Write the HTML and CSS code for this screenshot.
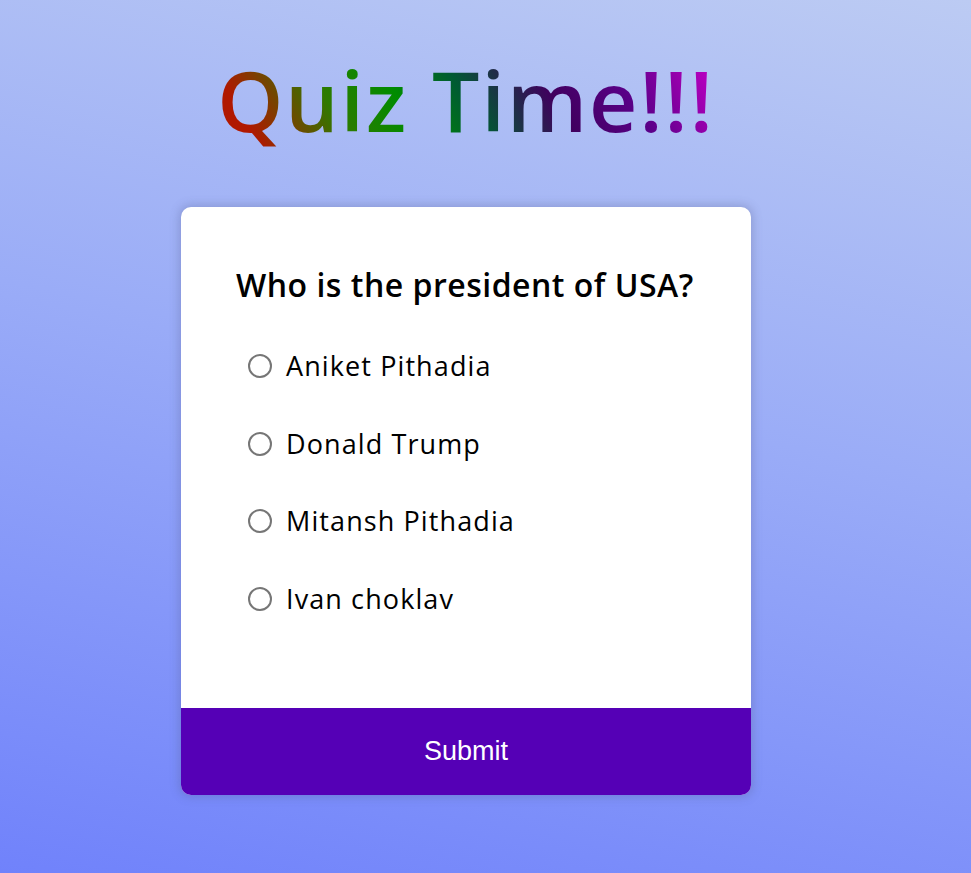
FILE: index.html
```html
<!DOCTYPE html>
<html lang="en">
<head>
<meta charset="utf-8">
<title>Quiz Time</title>
<link rel="stylesheet" href="styles.css">
</head>
<body>
<main class="page">
  <h1 class="title">Quiz Time!!!</h1>
  <section class="card">
    <div class="quiz-body">
      <h2 class="question">Who is the president of USA?</h2>
      <ul class="options">
        <li class="option"><span class="radio"></span><span class="label">Aniket Pithadia</span></li>
        <li class="option"><span class="radio"></span><span class="label">Donald Trump</span></li>
        <li class="option"><span class="radio"></span><span class="label">Mitansh Pithadia</span></li>
        <li class="option"><span class="radio"></span><span class="label">Ivan choklav</span></li>
      </ul>
    </div>
    <button class="submit">Submit</button>
  </section>
</main>
</body>
</html>
```
FILE: styles.css
```css
html, body {
  margin: 0;
  padding: 0;
  height: 100%;
}
body {
  background: linear-gradient(12deg, #7082fb 0%, #9aacf7 55%, #bccbf3 100%);
  font-family: "Open Sans", "Liberation Sans", sans-serif;
  overflow: hidden;
}
.page {
  display: flex;
  flex-direction: column;
  align-items: center;
  padding: 0 39px 0 0;
}
.title {
  margin: 50px 0 0;
  font-size: 84px;
  line-height: 100px;
  font-weight: 600;
  letter-spacing: 2px;
  background: linear-gradient(60deg, #b01800 8%, #2e7a00 25%, #008c00 38%, #005a32 50%, #40005e 66%, #5a0088 80%, #cc00cc 100%);
  -webkit-background-clip: text;
  background-clip: text;
  color: transparent;
}
.card {
  margin-top: 57px;
  width: 570px;
  background: #fff;
  border-radius: 10px;
  box-shadow: 0 0 10px 2px rgba(80, 90, 140, 0.3);
  overflow: hidden;
}
.quiz-body {
  padding: 58px 55px 91px;
}
.question {
  margin: 0;
  font-size: 32px;
  line-height: 40px;
  font-weight: 600;
  letter-spacing: 0.5px;
  color: #000;
}
.options {
  list-style: none;
  margin: 43px 0 0;
  padding: 0 0 0 12px;
  display: flex;
  flex-direction: column;
  gap: 41.5px;
}
.option {
  display: flex;
  align-items: center;
  gap: 14px;
  height: 36px;
}
.radio {
  width: 20px;
  height: 20px;
  border: 2px solid #767676;
  border-radius: 50%;
  flex: none;
}
.label {
  font-size: 27px;
  line-height: 36px;
  letter-spacing: 1.1px;
  color: #000;
}
.submit {
  display: block;
  width: 100%;
  height: 87px;
  border: none;
  background: #5500b6;
  color: #fff;
  font-family: "Liberation Sans", Arial, sans-serif;
  font-size: 27px;
  cursor: pointer;
}
```
